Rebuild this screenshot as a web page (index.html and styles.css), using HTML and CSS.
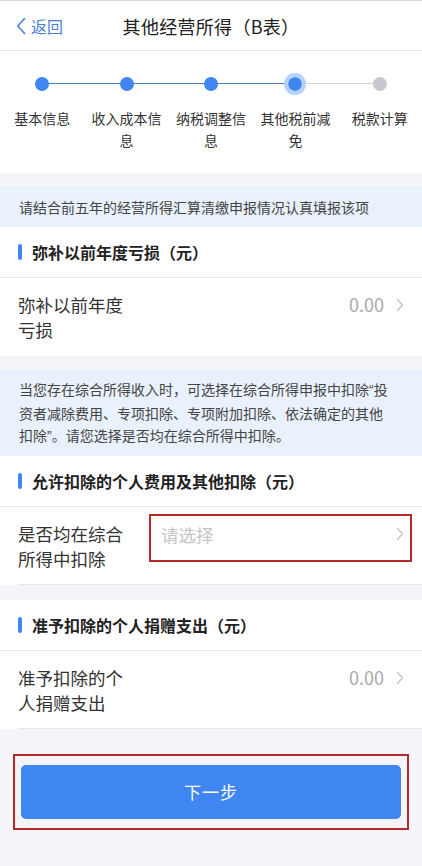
FILE: index.html
```html
<!DOCTYPE html>
<html lang="zh">
<head>
<meta charset="utf-8">
<link rel="stylesheet" href="styles.css">
</head>
<body>
<div class="page">
  <header class="topbar">
    <div class="back">
      <svg class="back-icon" width="10" height="18" viewBox="0 0 10 18"><path d="M8.5 1.5 L1.8 9 L8.5 16.5" fill="none" stroke="#4a80d6" stroke-width="1.6" stroke-linecap="round" stroke-linejoin="round"/></svg>
      <span>返回</span>
    </div>
    <div class="title">其他经营所得（B表）</div>
  </header>

  <section class="steps">
    <div class="track">
      <div class="seg done"></div><div class="seg done"></div><div class="seg done"></div><div class="seg todo"></div>
    </div>
    <div class="step-list">
      <div class="step"><span class="dot"></span><span class="label">基本信息</span></div>
      <div class="step"><span class="dot"></span><span class="label">收入成本信息</span></div>
      <div class="step"><span class="dot"></span><span class="label">纳税调整信息</span></div>
      <div class="step current"><span class="dot"></span><span class="label">其他税前减免</span></div>
      <div class="step pending"><span class="dot"></span><span class="label">税款计算</span></div>
    </div>
  </section>

  <div class="notice single">请结合前五年的经营所得汇算清缴申报情况认真填报该项</div>
  <section class="card">
    <div class="card-head"><span class="bar"></span>弥补以前年度亏损（元）</div>
    <div class="row">
      <div class="row-label">弥补以前年度<br>亏损</div>
      <div class="row-value">0.00</div>
      <svg class="chev" width="8" height="14" viewBox="0 0 8 14"><path d="M1.5 1.5 L6.5 7 L1.5 12.5" fill="none" stroke="#c4c4c8" stroke-width="1.4" stroke-linecap="round" stroke-linejoin="round"/></svg>
    </div>
  </section>

  <div class="notice multi">当您存在综合所得收入时，可选择在综合所得申报中扣除<span class="q">“</span>投<br>资者减除费用、专项扣除、专项附加扣除、依法确定的其他<br>扣除<span class="q">”</span>。请您选择是否均在综合所得中扣除。</div>
  <section class="card">
    <div class="card-head"><span class="bar"></span>允许扣除的个人费用及其他扣除（元）</div>
    <div class="row inset">
      <div class="row-label">是否均在综合<br>所得中扣除</div>
      <div class="select-box">
        <span class="placeholder">请选择</span>
        <svg class="chev" width="8" height="14" viewBox="0 0 8 14"><path d="M1.5 1.5 L6.5 7 L1.5 12.5" fill="none" stroke="#c4c4c8" stroke-width="1.4" stroke-linecap="round" stroke-linejoin="round"/></svg>
      </div>
    </div>
  </section>

  <section class="card spaced">
    <div class="card-head"><span class="bar"></span>准予扣除的个人捐赠支出（元）</div>
    <div class="row inset">
      <div class="row-label">准予扣除的个<br>人捐赠支出</div>
      <div class="row-value">0.00</div>
      <svg class="chev" width="8" height="14" viewBox="0 0 8 14"><path d="M1.5 1.5 L6.5 7 L1.5 12.5" fill="none" stroke="#c4c4c8" stroke-width="1.4" stroke-linecap="round" stroke-linejoin="round"/></svg>
    </div>
  </section>

  <div class="footer">
    <div class="btn-frame">
      <button class="next">下一步</button>
    </div>
  </div>
</div>
</body>
</html>
```

FILE: styles.css
```css
* { box-sizing: border-box; margin: 0; padding: 0; }
html, body { width: 422px; height: 866px; }
body {
  font-family: "Noto Sans CJK SC", "Noto Sans", sans-serif;
  background: #f4f5f9;
  color: #333;
  overflow: hidden;
}
.page { display: flex; flex-direction: column; min-height: 866px; }

.topbar {
  position: relative;
  height: 51px;
  background: #fff;
  border-top: 1px solid #dcdcdc;
  border-bottom: 1px solid #e4e4e6;
  display: flex;
  align-items: center;
  justify-content: center;
}
.back {
  position: absolute;
  left: 16px;
  top: 0;
  bottom: 0;
  display: flex;
  align-items: center;
  gap: 5px;
  color: #4a80d6;
  font-size: 16px;
}
.title { font-size: 18px; color: #222; letter-spacing: 0.3px; }

.steps {
  position: relative;
  background: #fff;
  height: 122px;
  padding-top: 22px;
}
.track {
  position: absolute;
  left: 42px;
  right: 43px;
  top: 32px;
  display: flex;
}
.seg { flex: 1; height: 1px; }
.seg.done { background: #4a7fc8; }
.seg.todo { background: #cfcfd4; }
.step-list { display: grid; grid-template-columns: repeat(5, 1fr); position: relative; }
.step { display: flex; flex-direction: column; align-items: center; }
.dot {
  width: 14px; height: 14px; border-radius: 50%;
  background: #3f86f2;
  margin: 4px 0;
}
.step.current .dot {
  width: 22px; height: 22px; margin: 0;
  border: 4px solid #b4d2fa;
  background: #3f86f2;
  background-clip: padding-box;
}
.step.pending .dot { background: #c8c8d0; }
.label {
  margin-top: 12px;
  width: 76px;
  text-align: center;
  font-size: 14px;
  line-height: 22px;
  color: #333;
}

.notice {
  background: #e8f1fc;
  color: #444;
  font-size: 14px;
  padding: 0 12px 0 19px;
  white-space: nowrap;
}
.notice.single { margin-top: 14px; height: 40px; line-height: 40px; }
.notice.multi { margin-top: 14px; line-height: 22.5px; padding-top: 8px; padding-bottom: 8px; }
.q { font-family: "Liberation Sans", sans-serif; }

.card { background: #fff; }
.card.spaced { margin-top: 15px; }
.card-head {
  height: 51px;
  display: flex;
  align-items: center;
  padding-left: 18px;
  font-size: 16px;
  font-weight: 700;
  color: #222;
  border-bottom: 1px solid #e6e6e8;
}
.bar {
  width: 4px; height: 16px; border-radius: 2px;
  background: #3f86f2;
  margin-right: 10px;
}
.row {
  height: 78px;
  display: flex;
  align-items: flex-start;
  padding: 14px 18px 0 18px;
}
.row.inset { height: 78px; position: relative; }
.row.inset::after {
  content: "";
  position: absolute;
  left: 18px; right: 0; bottom: 0;
  height: 1px;
  background: #e6e6e8;
}
.row-label { font-size: 17.5px; line-height: 25px; color: #333; flex: 1; }
.row-value { font-size: 18px; line-height: 25px; color: #a8a8ac; margin-right: 12px; }
.chev { margin-top: 6px; }
.select-box {
  width: 263px;
  height: 48px;
  margin-top: -7px;
  margin-right: -8px;
  border: 2px solid #b8282a;
  display: flex;
  align-items: flex-start;
  justify-content: space-between;
  padding: 6px 6px 0 10px;
}
.placeholder { font-size: 17.5px; line-height: 25px; color: #c4c4c8; }
.select-box .chev { margin-top: 5px; }

.footer { flex: 1; padding-top: 25px; }
.btn-frame {
  margin: 0 13px;
  border: 2px solid #b8282a;
  padding: 9px 6px;
}
.next {
  display: block;
  width: 100%;
  height: 54px;
  border: none;
  border-radius: 5px;
  background: #3f86f2;
  color: #fff;
  font-family: "Noto Sans CJK SC", sans-serif;
  font-size: 17px;
  letter-spacing: 1px;
}
```
